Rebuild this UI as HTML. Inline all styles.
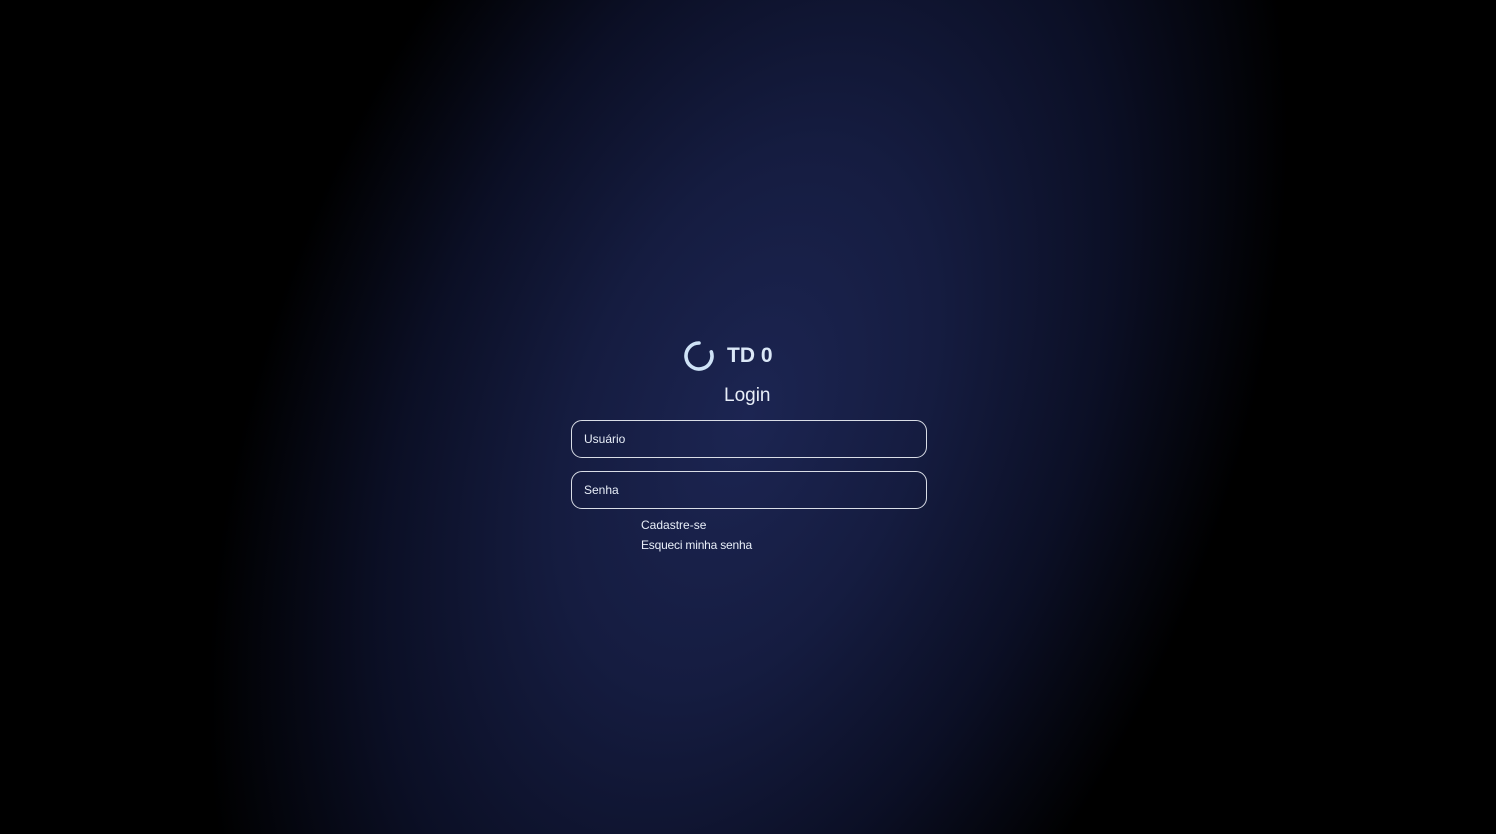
<!DOCTYPE html>
<html><head><meta charset="utf-8"><style>
html,body{margin:0;padding:0;width:1496px;height:834px;overflow:hidden;background:#000;}
body{font-family:"Liberation Sans",sans-serif;}
.wrap{position:relative;width:1496px;height:834px;overflow:hidden;}
.bg{position:absolute;left:-252px;top:-333px;width:2000px;height:1500px;transform:rotate(22deg);
background:radial-gradient(ellipse 480px 820px at 1000px 750px,#1c2552 0%,#151c40 35%,#0b0f25 68%,#000 100%);}
.t{position:absolute;color:#e8eef8;}
.in{position:absolute;left:571px;width:356px;height:38px;border:1px solid #d9dde6;border-radius:11px;box-sizing:border-box;}
.in span{position:absolute;left:12px;top:11px;font-size:12px;color:#e8eef8;}
</style></head><body><div class="wrap">
<div class="bg"></div>
<svg style="position:absolute;left:683px;top:340px" width="32" height="32" viewBox="0 0 32 32">
<path d="M16 3 A13 13 0 1 0 28.3 11.8" fill="none" stroke="#cfe3f7" stroke-width="3.6" stroke-linecap="round"/>
</svg>
<div class="t" style="left:727px;top:344px;font-size:21px;font-weight:bold;color:#dbe8f7;">TD 0</div>
<div class="t" style="left:724px;top:385px;font-size:19px;">Login</div>
<div class="in" style="top:420px"><span>Usuário</span></div>
<div class="in" style="top:471px"><span>Senha</span></div>
<div class="t" style="left:641px;top:518px;font-size:12px;">Cadastre-se</div>
<div class="t" style="left:641px;top:538px;font-size:12px;letter-spacing:-0.2px;">Esqueci minha senha</div>
</div></body></html>
